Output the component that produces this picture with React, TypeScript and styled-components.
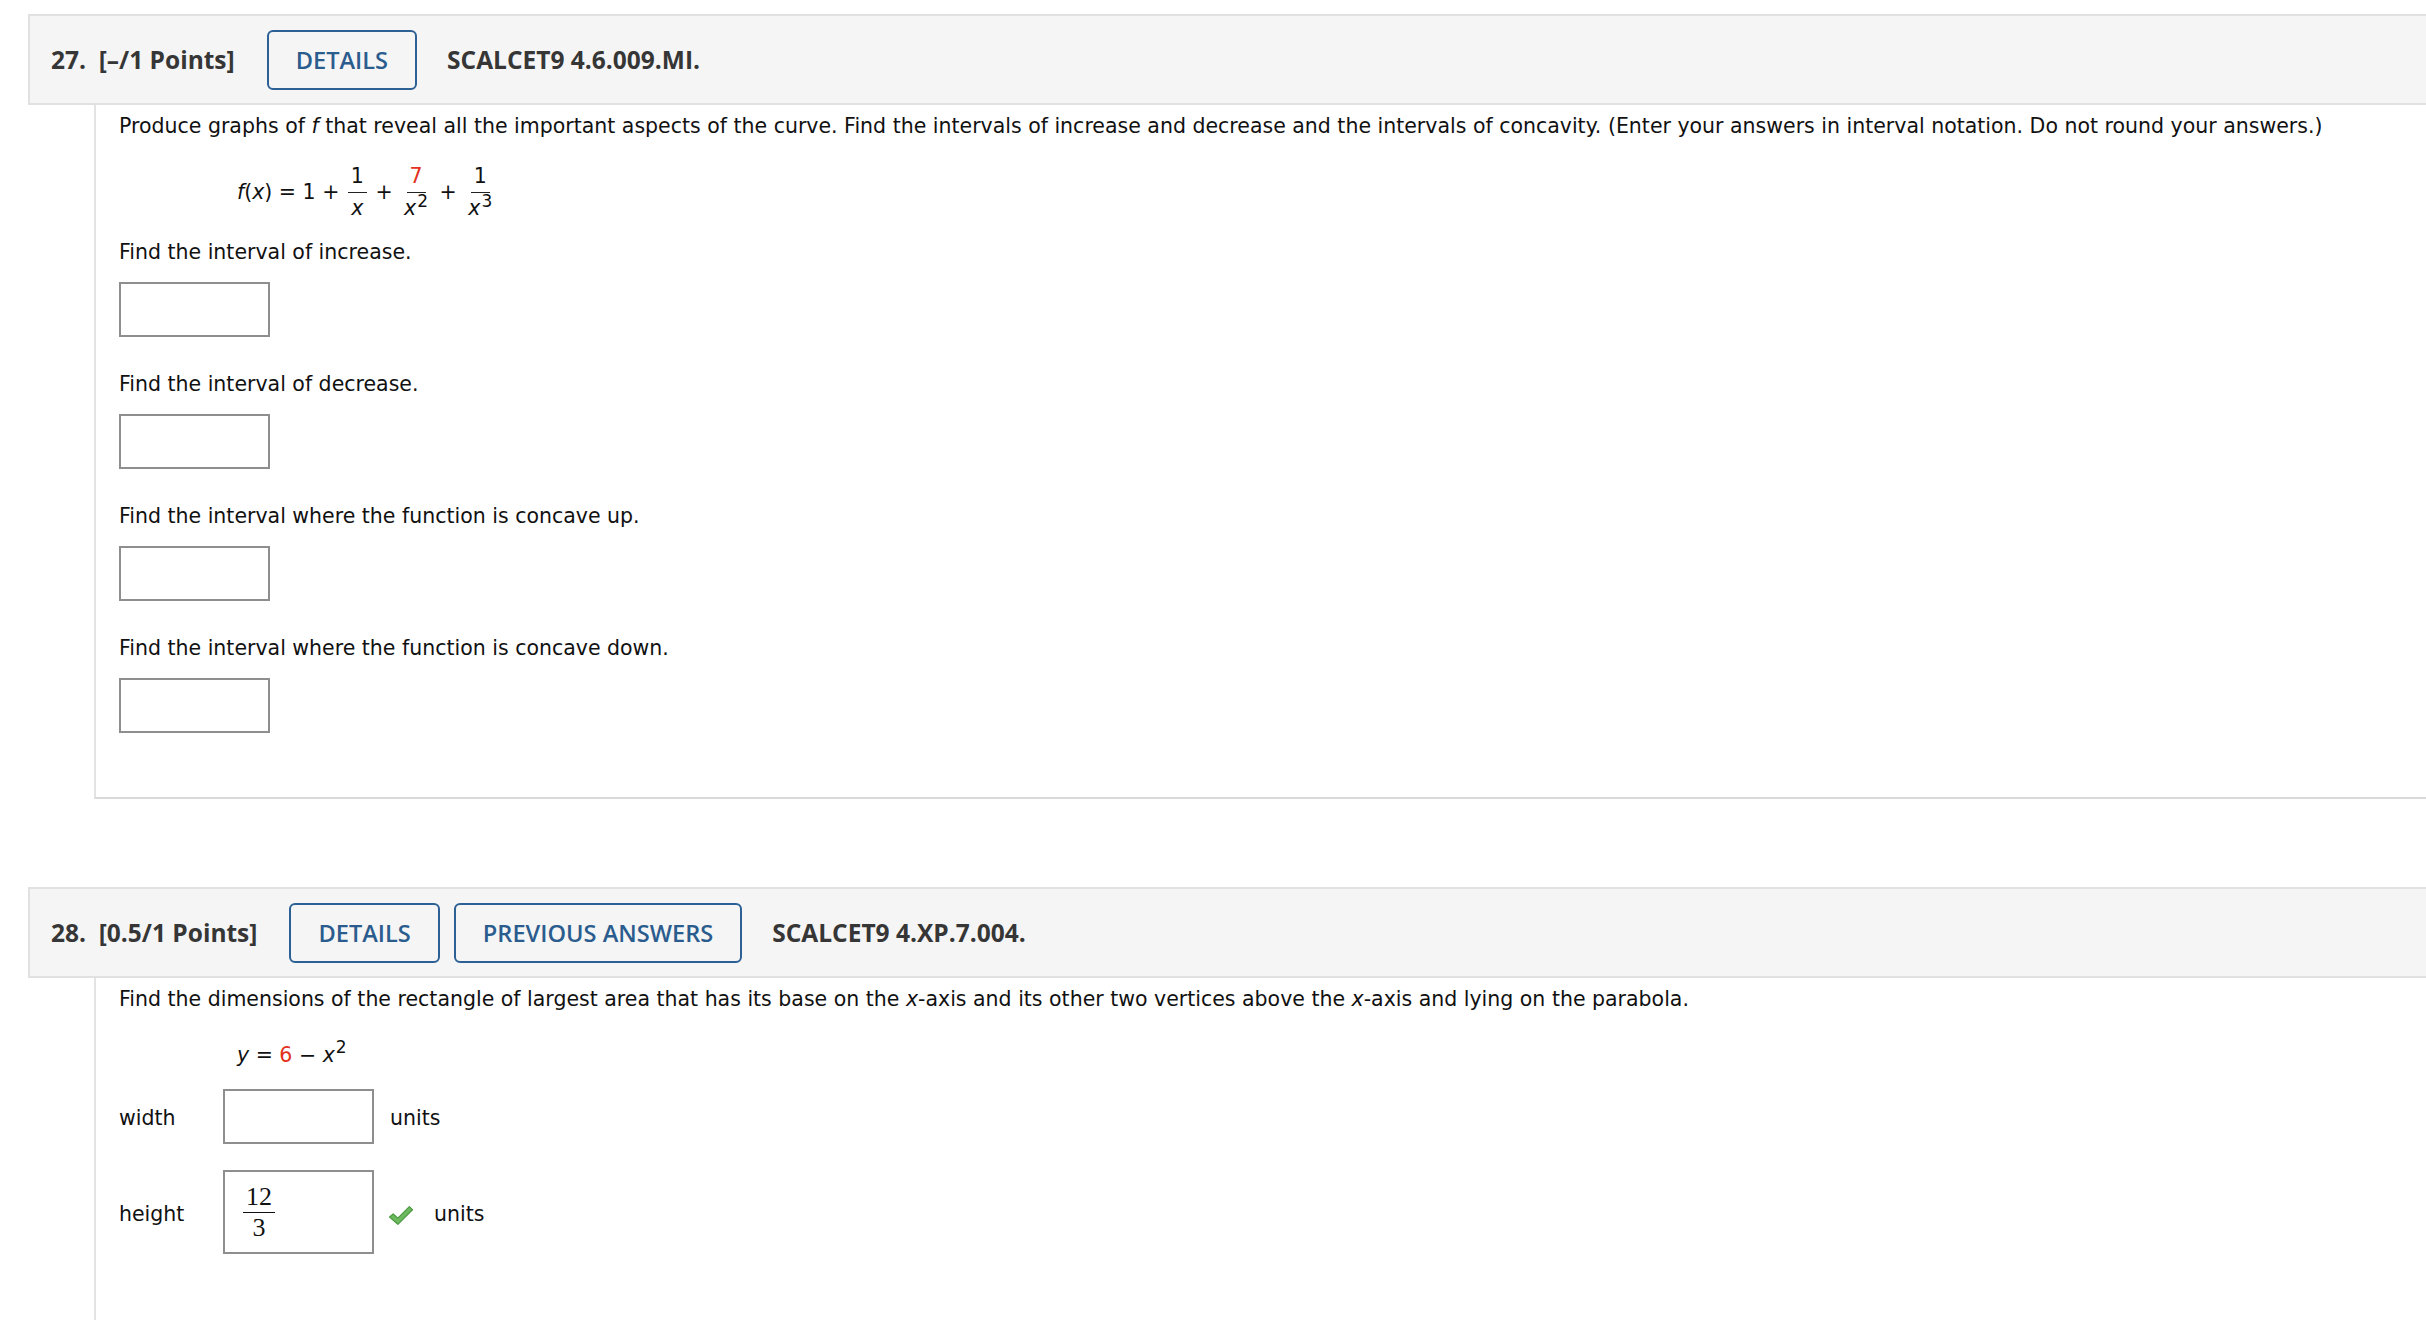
import React, { FC, ReactNode } from 'react'
import styled, { createGlobalStyle } from 'styled-components'

const TEXT_FONT = `"DejaVu Sans", Verdana, sans-serif`
const HEAD_FONT = `"Open Sans", "Noto Sans", sans-serif`

const GlobalStyle = createGlobalStyle`
  html, body {
    margin: 0;
    padding: 0;
    background: #fff;
    overflow: hidden;
  }
  body {
    font-family: ${TEXT_FONT};
    color: #111;
  }
`

type QuestionProps = {
  number: string
  points: string
  code: string
  buttons: string[]
  children: ReactNode
}

const Question: FC<QuestionProps> = ({ number, points, code, buttons, children }) => (
  <QuestionBlock>
    <Header>
      <Title>
        {number}
        {'\u00a0 '}
        {points}
      </Title>
      <Buttons>
        {buttons.map(label => (
          <HeaderButton key={label}>{label}</HeaderButton>
        ))}
      </Buttons>
      <Code>{code}</Code>
    </Header>
    <Body>{children}</Body>
  </QuestionBlock>
)

const Frac: FC<{ num: ReactNode; den: ReactNode }> = ({ num, den }) => (
  <Fraction>
    <Num>{num}</Num>
    <Den>{den}</Den>
  </Fraction>
)

const Check = () => (
  <svg width="26" height="21" viewBox="0 0 25 20">
    <path
      d="M1.5 11.5 L5 8.5 L9.5 12.5 L20.5 1.5 L23.5 4.5 L9.5 18.5 Z"
      fill="#6dba5e"
      stroke="#4d9a43"
      strokeWidth="1.2"
      strokeLinejoin="round"
    />
  </svg>
)

export default function App() {
  return (
    <>
      <GlobalStyle />
      <Page>
        <Question number="27." points="[–/1 Points]" code="SCALCET9 4.6.009.MI." buttons={['DETAILS']}>
          <Para>
            Produce graphs of <i>f</i> that reveal all the important aspects of the curve. Find the intervals of
            increase and decrease and the intervals of concavity. (Enter your answers in interval notation. Do not
            round your answers.)
          </Para>
          <Formula>
            <i>f</i>(<i>x</i>) = 1 + <Frac num="1" den={<i>x</i>} /> +{' '}
            <Frac
              num={<Red>7</Red>}
              den={
                <>
                  <i>x</i>
                  <Sup>2</Sup>
                </>
              }
            />{' '}
            +{' '}
            <Frac
              num="1"
              den={
                <>
                  <i>x</i>
                  <Sup>3</Sup>
                </>
              }
            />
          </Formula>
          <Part>
            <Label>Find the interval of increase.</Label>
            <Box />
          </Part>
          <Part>
            <Label>Find the interval of decrease.</Label>
            <Box />
          </Part>
          <Part>
            <Label>Find the interval where the function is concave up.</Label>
            <Box />
          </Part>
          <Part>
            <Label>Find the interval where the function is concave down.</Label>
            <Box />
          </Part>
        </Question>

        <Question
          number="28."
          points="[0.5/1 Points]"
          code="SCALCET9 4.XP.7.004."
          buttons={['DETAILS', 'PREVIOUS ANSWERS']}
        >
          <Para>
            Find the dimensions of the rectangle of largest area that has its base on the <i>x</i>-axis and its other
            two vertices above the <i>x</i>-axis and lying on the parabola.
          </Para>
          <Equation>
            <i>y</i> = <Red>6</Red> − <i>x</i>
            <EqSup>2</EqSup>
          </Equation>
          <AnswerGrid>
            <RowLabel>width</RowLabel>
            <Box />
            <Units>units</Units>

            <RowLabel>height</RowLabel>
            <TallBox>
              <SerifFrac>
                <SerifNum>12</SerifNum>
                <SerifDen>3</SerifDen>
              </SerifFrac>
            </TallBox>
            <Graded>
              <Check />
              <span>units</span>
            </Graded>
          </AnswerGrid>
        </Question>
      </Page>
    </>
  )
}

const Page = styled.div`
  padding: 14px 0 0 28px;
`
const QuestionBlock = styled.section`
  & + & {
    margin-top: 88px;
  }
`
const Header = styled.div`
  display: flex;
  align-items: center;
  height: 87px;
  padding-left: 21px;
  background-color: #f5f5f5;
  border: 2px solid #e1e1e1;
  border-right: none;
`
const Title = styled.div`
  font-family: ${HEAD_FONT};
  font-size: 24.5px;
  font-weight: 700;
  color: #363636;
  white-space: pre;
  margin-right: 32px;
`
const Buttons = styled.div`
  display: flex;
  gap: 14px;
  margin-right: 30px;
`
const HeaderButton = styled.div`
  display: flex;
  align-items: center;
  height: 56px;
  padding: 0 27px;
  border: 2px solid #2d6095;
  border-radius: 6px;
  font-family: ${HEAD_FONT};
  font-size: 23.6px;
  font-weight: 600;
  color: #2b5c8e;
`
const Code = styled.div`
  font-family: ${HEAD_FONT};
  font-size: 24.5px;
  font-weight: 700;
  color: #363636;
`
const Body = styled.div`
  margin-left: 66px;
  padding: 8px 24px 64px 23px;
  border-left: 2px solid #e3e3e3;
  border-bottom: 2px solid #d9d9d9;
  font-size: 20.5px;
  line-height: 27px;
  color: #111;
`
const Para = styled.p`
  margin: 0;
`
const Formula = styled.div`
  padding: 23px 0 0 118px;
  height: 43px;
  line-height: 27px;
`
const Fraction = styled.span`
  display: inline-flex;
  flex-direction: column;
  align-items: center;
  vertical-align: middle;
  padding: 0 2px;
  line-height: 27px;
`
const Num = styled.span`
  display: block;
  padding: 0 3px 2px;
  border-bottom: 1.5px solid #222;
`
const Den = styled.span`
  display: block;
  padding: 2px 3px 0;
`
const Sup = styled.sup`
  font-size: 17px;
  line-height: 0;
  vertical-align: 8px;
  margin-left: 1px;
`
const Red = styled.span`
  color: #e2311d;
`
const Part = styled.div`
  margin-top: 33px;

  & + & {
    margin-top: 34px;
  }
`
const Label = styled.div`
  margin-bottom: 16px;
`
const Box = styled.div`
  width: 147px;
  height: 51px;
  border: 2px solid #8e8e8e;
  background: #fff;
`
const Equation = styled.div`
  padding: 29px 0 0 118px;
  height: 35px;
`
const EqSup = styled.sup`
  font-size: 17px;
  line-height: 0;
  vertical-align: 9px;
  margin-left: 1px;
`
const AnswerGrid = styled.div`
  display: grid;
  grid-template-columns: 104px 151px auto;
  align-items: center;
  row-gap: 26px;
  width: max-content;
  margin-top: 12px;
  padding-bottom: 200px;
`
const RowLabel = styled.div`
  padding-top: 4px;
`
const Units = styled.div`
  padding: 4px 0 0 16px;
`
const TallBox = styled.div`
  display: flex;
  align-items: center;
  width: 129px;
  height: 80px;
  padding-left: 18px;
  border: 2px solid #8e8e8e;
`
const SerifFrac = styled.span`
  display: inline-flex;
  flex-direction: column;
  align-items: center;
  font-family: "Liberation Serif", "Times New Roman", serif;
  font-size: 26px;
  line-height: 30px;
  color: #111;
`
const SerifNum = styled.span`
  padding: 0 3px;
  border-bottom: 1.5px solid #111;
`
const SerifDen = styled.span`
  padding: 0 3px;
`
const Graded = styled.div`
  display: flex;
  align-items: center;
  gap: 20px;
  padding: 4px 0 0 14px;

  svg {
    margin-top: 2px;
  }
`
